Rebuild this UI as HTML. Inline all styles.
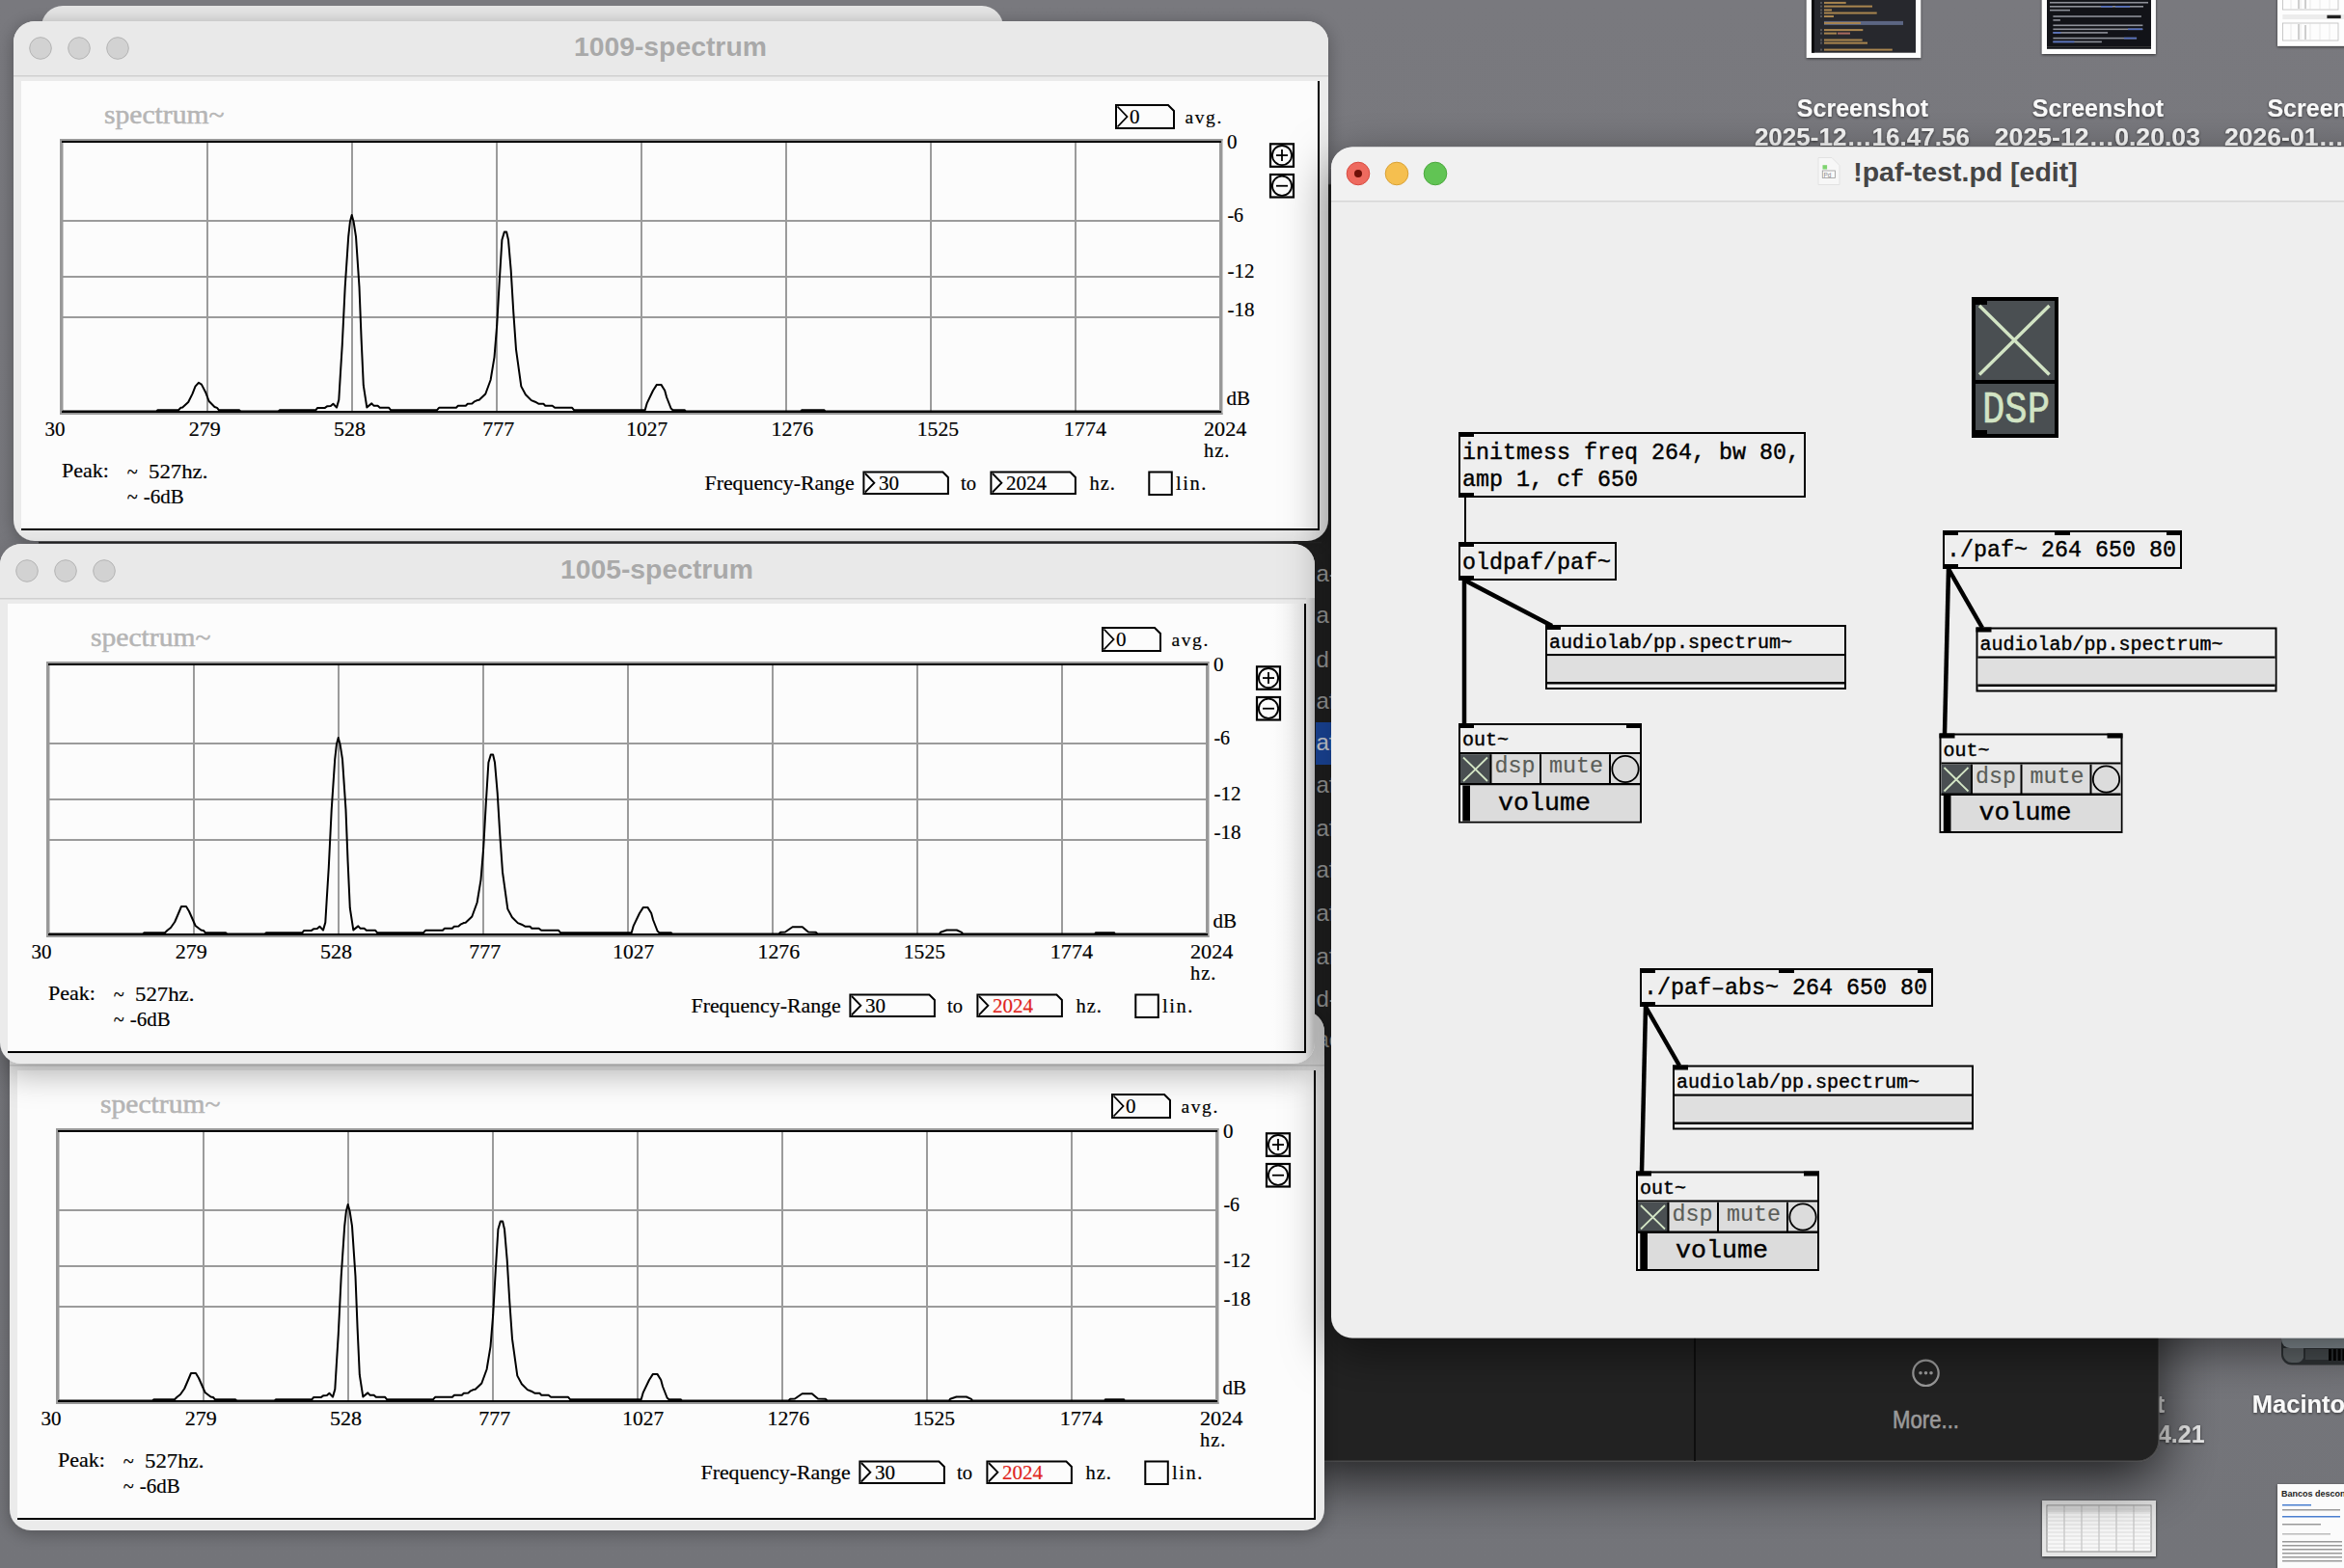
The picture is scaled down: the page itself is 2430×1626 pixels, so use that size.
<!DOCTYPE html><html><head><meta charset="utf-8"><style>html,body{margin:0;padding:0;background:#6e6f74;overflow:hidden}svg{display:block}</style></head><body>
<svg width="2430" height="1626" viewBox="0 0 2430 1626">
<defs>
<filter id="winshadow" x="-10%" y="-10%" width="120%" height="130%"><feDropShadow dx="0" dy="3" stdDeviation="9" flood-color="#000" flood-opacity="0.3"/></filter>
<filter id="winshadow2" x="-10%" y="-10%" width="120%" height="140%"><feDropShadow dx="0" dy="12" stdDeviation="16" flood-color="#000" flood-opacity="0.28"/></filter>
<filter id="pdshadow" x="-10%" y="-10%" width="120%" height="130%"><feDropShadow dx="0" dy="14" stdDeviation="24" flood-color="#000" flood-opacity="0.5"/></filter>
<filter id="bigshadow" x="-10%" y="-10%" width="120%" height="130%"><feDropShadow dx="0" dy="18" stdDeviation="30" flood-color="#000" flood-opacity="0.75"/></filter>
<filter id="txtshadow" x="-10%" y="-30%" width="120%" height="160%"><feDropShadow dx="0" dy="1" stdDeviation="1.5" flood-color="#000" flood-opacity="0.6"/></filter>
<linearGradient id="desk" x1="0" y1="0" x2="0" y2="1"><stop offset="0" stop-color="#79797e"/><stop offset="1" stop-color="#737479"/></linearGradient>
<linearGradient id="vg" x1="0" y1="0" x2="0" y2="1"><stop offset="0" stop-color="#fff" stop-opacity="0.1"/><stop offset="0.5" stop-color="#fff" stop-opacity="0.6"/><stop offset="1" stop-color="#fff"/></linearGradient>
<mask id="vmask" maskContentUnits="objectBoundingBox"><rect width="1" height="1" fill="url(#vg)"/></mask>
<linearGradient id="rshade" x1="0" y1="0" x2="1" y2="0"><stop offset="0" stop-color="#fcfcfc" stop-opacity="0"/><stop offset="1" stop-color="#d9d9d9"/></linearGradient>
<linearGradient id="bshade" x1="0" y1="0" x2="0" y2="1"><stop offset="0" stop-color="#fcfcfc" stop-opacity="0"/><stop offset="1" stop-color="#ececec"/></linearGradient>
<linearGradient id="frshade" x1="0" y1="0" x2="1" y2="0"><stop offset="0" stop-color="#e6e6e6"/><stop offset="1" stop-color="#c4c4c4"/></linearGradient>
<clipPath id="winclip"><rect x="14" y="22" width="1363" height="539" rx="22"/></clipPath>
<linearGradient id="bfshade" x1="0" y1="0" x2="1" y2="0"><stop offset="0" stop-color="#ebebeb" stop-opacity="0"/><stop offset="1" stop-color="#c6c6c6"/></linearGradient>
<linearGradient id="tb" x1="0" y1="0" x2="0" y2="1"><stop offset="0" stop-color="#f3f3f3"/><stop offset="1" stop-color="#eeeeee"/></linearGradient>
</defs>
<rect x="0" y="0" width="2430" height="1626" fill="url(#desk)"/>
<rect x="1872.8" y="-10" width="118.4" height="70" fill="#fdfdfd" filter="url(#txtshadow)"/>
<rect x="1878" y="-10" width="108" height="64.7" fill="#27282d"/>
<rect x="1878" y="-10" width="3" height="64.7" fill="#0c0c0e"/>
<rect x="1891" y="1.9" width="22.7" height="2" fill="#a9854f"/>
<rect x="1887" y="1.9" width="2" height="2" fill="#55565a"/>
<rect x="1891" y="5.6" width="50" height="2" fill="#a9854f"/>
<rect x="1887" y="5.6" width="2" height="2" fill="#55565a"/>
<rect x="1891" y="9.4" width="8" height="2" fill="#a9854f"/>
<rect x="1887" y="9.4" width="2" height="2" fill="#55565a"/>
<rect x="1891" y="12.5" width="54.7" height="2" fill="#a9854f"/>
<rect x="1887" y="12.5" width="2" height="2" fill="#55565a"/>
<rect x="1891" y="16" width="10" height="2" fill="#a9854f"/>
<rect x="1887" y="16" width="2" height="2" fill="#55565a"/>
<rect x="1891" y="30.1" width="40.3" height="2" fill="#a9854f"/>
<rect x="1887" y="30.1" width="2" height="2" fill="#55565a"/>
<rect x="1891" y="33.6" width="13" height="2" fill="#a9854f"/>
<rect x="1887" y="33.6" width="2" height="2" fill="#55565a"/>
<rect x="1891" y="40.5" width="39.7" height="2" fill="#a9854f"/>
<rect x="1887" y="40.5" width="2" height="2" fill="#55565a"/>
<rect x="1891" y="43.6" width="45" height="2" fill="#a9854f"/>
<rect x="1887" y="43.6" width="2" height="2" fill="#55565a"/>
<rect x="1891" y="50.6" width="70.8" height="2" fill="#a9854f"/>
<rect x="1887" y="50.6" width="2" height="2" fill="#55565a"/>
<rect x="1891" y="21.9" width="82" height="4" fill="#5c6683"/>
<rect x="1891" y="22.9" width="38" height="2" fill="#a9854f"/>
<rect x="1905" y="33.6" width="13" height="2" fill="#a86a60"/>
<rect x="2116.8" y="-10" width="118.1" height="66" fill="#fdfdfd" filter="url(#txtshadow)"/>
<rect x="2122" y="-10" width="108" height="60.8" fill="#121318"/>
<rect x="2125" y="1.9000000000000001" width="102" height="1.6" fill="#8d9098"/>
<rect x="2125" y="6.0" width="97" height="1.6" fill="#8d9098"/>
<rect x="2125" y="9.799999999999999" width="21" height="1.6" fill="#8d9098"/>
<rect x="2128.4" y="16.2" width="91.5" height="1.6" fill="#8d9098"/>
<rect x="2128.4" y="20.099999999999998" width="7.5" height="1.6" fill="#8d9098"/>
<rect x="2128.4" y="25.5" width="93" height="1.6" fill="#8d9098"/>
<rect x="2128.4" y="29.5" width="93" height="1.6" fill="#8d9098"/>
<rect x="2128.4" y="33.1" width="56.7" height="1.6" fill="#8d9098"/>
<rect x="2128.4" y="38.800000000000004" width="86.7" height="1.6" fill="#8d9098"/>
<rect x="2128.4" y="42.6" width="50.5" height="1.6" fill="#8d9098"/>
<rect x="2178" y="6.0" width="12" height="1.6" fill="#5570c0"/>
<rect x="2193" y="6.0" width="15" height="1.6" fill="#5570c0"/>
<rect x="2206" y="29.5" width="15" height="1.6" fill="#5570c0"/>
<rect x="2128.4" y="33.1" width="8" height="1.6" fill="#5570c0"/>
<rect x="2202" y="38.800000000000004" width="13" height="1.6" fill="#5570c0"/>
<rect x="2128.4" y="42.6" width="22" height="1.6" fill="#5570c0"/>
<rect x="2122" y="48" width="108" height="1" fill="#333"/>
<rect x="2361" y="-10" width="80" height="57.8" fill="#fdfdfd" filter="url(#txtshadow)"/>
<rect x="2366.4" y="-10" width="57.6" height="20" fill="none" stroke="#bbb" stroke-width="0.8"/>
<rect x="2366.4" y="24" width="57.6" height="18" fill="none" stroke="#bbb" stroke-width="0.8"/>
<line x1="2375" y1="-10" x2="2375" y2="10" stroke="#ddd" stroke-width="0.6"/>
<line x1="2375" y1="24" x2="2375" y2="42" stroke="#ddd" stroke-width="0.6"/>
<line x1="2385" y1="-10" x2="2385" y2="10" stroke="#ddd" stroke-width="0.6"/>
<line x1="2385" y1="24" x2="2385" y2="42" stroke="#ddd" stroke-width="0.6"/>
<line x1="2395" y1="-10" x2="2395" y2="10" stroke="#ddd" stroke-width="0.6"/>
<line x1="2395" y1="24" x2="2395" y2="42" stroke="#ddd" stroke-width="0.6"/>
<line x1="2405" y1="-10" x2="2405" y2="10" stroke="#ddd" stroke-width="0.6"/>
<line x1="2405" y1="24" x2="2405" y2="42" stroke="#ddd" stroke-width="0.6"/>
<line x1="2415" y1="-10" x2="2415" y2="10" stroke="#ddd" stroke-width="0.6"/>
<line x1="2415" y1="24" x2="2415" y2="42" stroke="#ddd" stroke-width="0.6"/>
<line x1="2383" y1="-10" x2="2383" y2="9" stroke="#888" stroke-width="0.8"/>
<line x1="2390" y1="0" x2="2390" y2="9" stroke="#888" stroke-width="0.8"/>
<line x1="2383" y1="25" x2="2383" y2="41" stroke="#888" stroke-width="0.8"/>
<line x1="2390" y1="26" x2="2390" y2="41" stroke="#888" stroke-width="0.8"/>
<rect x="2366.4" y="15" width="64" height="5" fill="#ececec"/>
<rect x="2412.4" y="15.7" width="14.3" height="3.4" fill="#222"/>
<g filter="url(#txtshadow)">
<text x="1931" y="120.5" font-family="Liberation Sans" font-size="25.5" fill="#fafafa" font-weight="bold" text-anchor="middle" textLength="136.3" lengthAdjust="spacingAndGlyphs">Screenshot</text>
<text x="1930.4" y="151" font-family="Liberation Sans" font-size="26" fill="#fafafa" font-weight="bold" text-anchor="middle" textLength="223" lengthAdjust="spacingAndGlyphs">2025-12…16.47.56</text>
<text x="2175" y="120.5" font-family="Liberation Sans" font-size="25.5" fill="#fafafa" font-weight="bold" text-anchor="middle" textLength="136.3" lengthAdjust="spacingAndGlyphs">Screenshot</text>
<text x="2174.4" y="151" font-family="Liberation Sans" font-size="26" fill="#fafafa" font-weight="bold" text-anchor="middle" textLength="213.2" lengthAdjust="spacingAndGlyphs">2025-12…0.20.03</text>
<text x="2350.4" y="120.5" font-family="Liberation Sans" font-size="25.5" fill="#fafafa" font-weight="bold" textLength="136.3" lengthAdjust="spacingAndGlyphs">Screenshot</text>
<text x="2306" y="151" font-family="Liberation Sans" font-size="26" fill="#fafafa" font-weight="bold" textLength="124" lengthAdjust="spacingAndGlyphs">2026-01…</text>
</g>
<g filter="url(#txtshadow)">
<text x="2334.8" y="1465" font-family="Liberation Sans" font-size="25.5" fill="#fafafa" font-weight="bold">Macintosh HD</text>
<text x="2237" y="1496" font-family="Liberation Sans" font-size="26" fill="#ececec" font-weight="bold" textLength="48.5" lengthAdjust="spacingAndGlyphs">4.21</text>
<text x="2235.5" y="1465" font-family="Liberation Sans" font-size="26" fill="#ececec" font-weight="bold">t</text>
</g>
<path d="M2365,1370 H2440 V1415.5 H2376 A11,11 0 0 1 2365,1404.5 Z" fill="#2e3235"/>
<path d="M2365,1370 H2440 V1398 H2374 A9,9 0 0 1 2365,1389 Z" fill="#8a949a"/>
<path d="M2367,1398 H2388 V1408 A8,8 0 0 1 2380,1413 H2376 A9,9 0 0 1 2367,1405 Z" fill="#5f6568"/>
<rect x="2390" y="1399" width="24" height="11" fill="#474c4f"/>
<rect x="2414.0" y="1399" width="3" height="12" fill="#050505"/>
<rect x="2418.8" y="1399" width="3" height="12" fill="#050505"/>
<rect x="2423.6" y="1399" width="3" height="12" fill="#050505"/>
<rect x="2428.4" y="1399" width="3" height="12" fill="#050505"/>
<rect x="2117" y="1556" width="118" height="58" fill="#e6e6e6" filter="url(#txtshadow)"/>
<rect x="2122" y="1561" width="108" height="48" fill="#f8f8f8" stroke="#888" stroke-width="1"/>
<rect x="2123" y="1562" width="106" height="6" fill="#ddd"/>
<line x1="2140" y1="1561" x2="2140" y2="1609" stroke="#aaa" stroke-width="0.8"/>
<line x1="2158" y1="1561" x2="2158" y2="1609" stroke="#aaa" stroke-width="0.8"/>
<line x1="2176" y1="1561" x2="2176" y2="1609" stroke="#aaa" stroke-width="0.8"/>
<line x1="2194" y1="1561" x2="2194" y2="1609" stroke="#aaa" stroke-width="0.8"/>
<line x1="2212" y1="1561" x2="2212" y2="1609" stroke="#aaa" stroke-width="0.8"/>
<line x1="2122" y1="1565" x2="2230" y2="1565" stroke="#ccc" stroke-width="0.6"/>
<line x1="2122" y1="1569" x2="2230" y2="1569" stroke="#ccc" stroke-width="0.6"/>
<line x1="2122" y1="1573" x2="2230" y2="1573" stroke="#ccc" stroke-width="0.6"/>
<line x1="2122" y1="1577" x2="2230" y2="1577" stroke="#ccc" stroke-width="0.6"/>
<line x1="2122" y1="1581" x2="2230" y2="1581" stroke="#ccc" stroke-width="0.6"/>
<line x1="2122" y1="1585" x2="2230" y2="1585" stroke="#ccc" stroke-width="0.6"/>
<line x1="2122" y1="1589" x2="2230" y2="1589" stroke="#ccc" stroke-width="0.6"/>
<line x1="2122" y1="1593" x2="2230" y2="1593" stroke="#ccc" stroke-width="0.6"/>
<line x1="2122" y1="1597" x2="2230" y2="1597" stroke="#ccc" stroke-width="0.6"/>
<line x1="2122" y1="1601" x2="2230" y2="1601" stroke="#ccc" stroke-width="0.6"/>
<line x1="2122" y1="1605" x2="2230" y2="1605" stroke="#ccc" stroke-width="0.6"/>
<rect x="2361" y="1539" width="80" height="100" fill="#fbfbfb" filter="url(#txtshadow)"/>
<text x="2365" y="1552" font-family="Liberation Sans" font-size="9" fill="#222" font-weight="bold">Bancos desconfortáv</text>
<rect x="2366" y="1560" width="30" height="1.5" fill="#4a7fd0"/>
<rect x="2366" y="1565" width="60" height="1.5" fill="#999"/>
<rect x="2366" y="1572" width="60" height="1.5" fill="#4a7fd0"/>
<rect x="2366" y="1580" width="40" height="1.5" fill="#999"/>
<rect x="2366" y="1590" width="50" height="1.5" fill="#bbb"/>
<rect x="2366" y="1598" width="62" height="1.5" fill="#999"/>
<rect x="2366" y="1602" width="62" height="1.5" fill="#999"/>
<rect x="2366" y="1606" width="62" height="1.5" fill="#999"/>
<rect x="2366" y="1610" width="62" height="1.5" fill="#999"/>
<rect x="2366" y="1614" width="62" height="1.5" fill="#999"/>
<rect x="2366" y="1618" width="62" height="1.5" fill="#999"/>
<path d="M1340,191 H2238 V1493 A22,22 0 0 1 2216,1515 H1340 Z" fill="#222222" stroke="#4a4a4a" stroke-width="1.2" filter="url(#bigshadow)"/>
<rect x="1756" y="1380" width="2" height="135" fill="#0e0e0e"/>
<circle cx="1996.5" cy="1423.8" r="13.2" fill="none" stroke="#9a9a9a" stroke-width="2.2"/>
<circle cx="1991.0" cy="1423.8" r="1.8" fill="#9a9a9a"/>
<circle cx="1996.5" cy="1423.8" r="1.8" fill="#9a9a9a"/>
<circle cx="2002.0" cy="1423.8" r="1.8" fill="#9a9a9a"/>
<text x="1996.5" y="1481" font-family="Liberation Sans" font-size="25" fill="#9a9a9a" text-anchor="middle" textLength="69" lengthAdjust="spacingAndGlyphs" stroke="#9a9a9a" stroke-width="0.6">More...</text>
<rect x="1364" y="749" width="16" height="44" fill="#1d4fb0"/>
<text x="1364.5" y="603" font-family="Liberation Sans" font-size="24" fill="#a9a9a9">a-</text>
<text x="1364.5" y="646" font-family="Liberation Sans" font-size="24" fill="#a9a9a9">a</text>
<text x="1364.5" y="692" font-family="Liberation Sans" font-size="24" fill="#a9a9a9">d</text>
<text x="1364.5" y="735" font-family="Liberation Sans" font-size="24" fill="#a9a9a9">af</text>
<text x="1364.5" y="778" font-family="Liberation Sans" font-size="24" fill="#e8ecf5">af</text>
<text x="1364.5" y="822" font-family="Liberation Sans" font-size="24" fill="#a9a9a9">af</text>
<text x="1364.5" y="867" font-family="Liberation Sans" font-size="24" fill="#a9a9a9">af</text>
<text x="1364.5" y="910" font-family="Liberation Sans" font-size="24" fill="#a9a9a9">af</text>
<text x="1364.5" y="955" font-family="Liberation Sans" font-size="24" fill="#a9a9a9">af</text>
<text x="1364.5" y="1000" font-family="Liberation Sans" font-size="24" fill="#a9a9a9">af</text>
<text x="1364.5" y="1044" font-family="Liberation Sans" font-size="24" fill="#a9a9a9">d-</text>
<text x="1364.5" y="1086" font-family="Liberation Sans" font-size="24" fill="#a9a9a9">ac</text>
<rect x="40" y="561.8" width="1330" height="1.6" fill="#2a2a2a"/>
<rect x="43" y="6" width="997" height="60" rx="22" fill="#e4e4e4"/>
<g transform="translate(-4,1026)">
<rect x="14" y="22" width="1363" height="539" rx="22" fill="#ebebeb" filter="url(#winshadow)"/>
<path d="M14,78.5 V44 A22,22 0 0 1 36,22 H1355 A22,22 0 0 1 1377,44 V78.5 Z" fill="#e9e9e9"/>
<line x1="14" y1="78.75" x2="1377" y2="78.75" stroke="#d0d0d0" stroke-width="1.5"/>
<circle cx="42" cy="50" r="11.3" fill="#d2d2d2" stroke="#b4b4b4" stroke-width="1"/>
<circle cx="82" cy="50" r="11.3" fill="#d2d2d2" stroke="#b4b4b4" stroke-width="1"/>
<circle cx="122" cy="50" r="11.3" fill="#d2d2d2" stroke="#b4b4b4" stroke-width="1"/>
<rect x="22" y="84" width="1345" height="465" fill="#fcfcfc"/>
<rect x="1366" y="84" width="2" height="466" fill="#000"/>
<rect x="22" y="548" width="1346" height="2" fill="#000"/>
<text x="108" y="128.4" font-family="Liberation Serif" font-size="27" fill="#b5b5b5" textLength="124.5" lengthAdjust="spacingAndGlyphs" stroke="#b5b5b5" stroke-width="0.5">spectrum~</text>
<path d="M1157,109 H1211 L1217,115 V133 H1157 Z" fill="none" stroke="#000" stroke-width="2"/>
<path d="M1158.5,110.5 L1168.5,121 L1158.5,131.5" fill="none" stroke="#000" stroke-width="1.8"/>
<text x="1171" y="127.6" font-family="Liberation Serif" font-size="21" fill="#000" textLength="10.5" lengthAdjust="spacingAndGlyphs" stroke="#000" stroke-width="0.2">0</text>
<text x="1228.5" y="127.6" font-family="Liberation Serif" font-size="19.5" fill="#000" stroke="#000" stroke-width="0.2" letter-spacing="1.6">avg.</text>
<rect x="62" y="144" width="1205.5" height="286" fill="#fcfcfc"/>
<rect x="214" y="148" width="2" height="278" fill="#9b9b9b"/>
<rect x="364" y="148" width="2" height="278" fill="#9b9b9b"/>
<rect x="514" y="148" width="2" height="278" fill="#9b9b9b"/>
<rect x="664" y="148" width="2" height="278" fill="#9b9b9b"/>
<rect x="814" y="148" width="2" height="278" fill="#9b9b9b"/>
<rect x="964" y="148" width="2" height="278" fill="#9b9b9b"/>
<rect x="1114" y="148" width="2" height="278" fill="#9b9b9b"/>
<rect x="65" y="228" width="1199" height="2" fill="#9b9b9b"/>
<rect x="65" y="286" width="1199" height="2" fill="#9b9b9b"/>
<rect x="65" y="328" width="1199" height="2" fill="#9b9b9b"/>
<rect x="62" y="144" width="3.5" height="286" fill="#999"/>
<rect x="1264" y="144" width="3.5" height="286" fill="#999"/>
<rect x="62" y="144" width="1205.5" height="2" fill="#999"/>
<rect x="62" y="428" width="1205.5" height="2" fill="#999"/>
<rect x="64" y="146" width="1202" height="2" fill="#000"/>
<rect x="64" y="426" width="1202" height="2" fill="#000"/>
<polyline points="65,426.5 162,426.5 163.5,425.2 185,425.2 187.5,422.7 191,420 195.2,414 199.5,404 202,398 207,398 210,403 213.1,410 216.6,418 222.5,422.5 225,423 226.8,425.2 248,425.2 249.5,426.5 288.5,426.5 290,425.2 327.5,425.2 329.2,422.9 336.9,422.9 339.4,421.2 342.8,421 345.4,418.8 349,422.6 351.3,414.6 352.7,391.2 354.8,357.3 357.7,297.8 361.2,245.4 362.9,230 364.7,223 366.6,230 369,245.4 372.5,297.8 374.6,351.6 376.8,399.7 380.3,422.4 385.3,418.4 387.4,420.7 391.6,420.7 393.8,422.7 403,422.7 405,425.2 453.1,425.2 455.1,422.8 472.9,422.8 474.9,420.7 482.8,420.7 484.8,418.8 489.4,418.4 491.4,416.7 494.7,415.1 496.7,414.8 503.3,408.5 508.6,394 512.5,370.3 515.2,337.2 517.8,291 520.4,248.8 522.8,240.6 525.1,240.6 527,248.8 529.7,280.5 532.3,324 535,362.3 540.3,400.6 544.9,409.2 550.8,415.1 554.8,416.7 558.7,418.8 563.4,418.8 565.3,420.7 572.6,420.7 575.2,422.8 593.1,422.8 595,425.2 666.8,425.2 668.7,425.2 670.6,418.4 677,405 680.9,398.9 685.4,398.9 689.2,405 691.1,412 695.6,423.5 697.5,425.2 709.7,425.2 711,426.5 821.5,426.5 823,424.8 828,424.5 835.6,419.2 845.8,419.2 852,424.5 860,424.8 861.5,426.5 987.9,426.5 989,424.8 995.5,422.5 1005.8,422.5 1011,424.8 1012.2,426.5 1149,426.5 1150,425.2 1169,425.2 1170,426.5 1264,426.5" fill="none" stroke="#000" stroke-width="2" stroke-linejoin="round"/>
<text x="1272" y="153.5" font-family="Liberation Serif" font-size="21.5" fill="#000" textLength="10.5" lengthAdjust="spacingAndGlyphs" stroke="#000" stroke-width="0.2">0</text>
<text x="1272.4" y="229.7" font-family="Liberation Serif" font-size="21.5" fill="#000" textLength="16.6" lengthAdjust="spacingAndGlyphs" stroke="#000" stroke-width="0.2">-6</text>
<text x="1272.4" y="287.9" font-family="Liberation Serif" font-size="21.5" fill="#000" textLength="28" lengthAdjust="spacingAndGlyphs" stroke="#000" stroke-width="0.2">-12</text>
<text x="1272.4" y="328.4" font-family="Liberation Serif" font-size="21.5" fill="#000" textLength="28" lengthAdjust="spacingAndGlyphs" stroke="#000" stroke-width="0.2">-18</text>
<text x="1271.5" y="419.7" font-family="Liberation Serif" font-size="21.5" fill="#000" textLength="24.5" lengthAdjust="spacingAndGlyphs" stroke="#000" stroke-width="0.2">dB</text>
<rect x="1317" y="149.3" width="24" height="23.5" fill="none" stroke="#000" stroke-width="2.2"/>
<circle cx="1329" cy="161.05" r="10.1" fill="none" stroke="#000" stroke-width="1.9"/>
<line x1="1323" y1="161.05" x2="1335" y2="161.05" stroke="#000" stroke-width="1.8"/>
<line x1="1329" y1="155.05" x2="1329" y2="167.05" stroke="#000" stroke-width="1.8"/>
<rect x="1317" y="181" width="24" height="23.5" fill="none" stroke="#000" stroke-width="2.2"/>
<circle cx="1329" cy="192.75" r="10.1" fill="none" stroke="#000" stroke-width="1.9"/>
<line x1="1323" y1="192.75" x2="1335" y2="192.75" stroke="#000" stroke-width="1.8"/>
<text x="46.5" y="452.2" font-family="Liberation Serif" font-size="21.7" fill="#000" textLength="21" lengthAdjust="spacingAndGlyphs" stroke="#000" stroke-width="0.2">30</text>
<text x="195.8" y="452.2" font-family="Liberation Serif" font-size="21.7" fill="#000" textLength="33" lengthAdjust="spacingAndGlyphs" stroke="#000" stroke-width="0.2">279</text>
<text x="346" y="452.2" font-family="Liberation Serif" font-size="21.7" fill="#000" textLength="33" lengthAdjust="spacingAndGlyphs" stroke="#000" stroke-width="0.2">528</text>
<text x="500.2" y="452.2" font-family="Liberation Serif" font-size="21.7" fill="#000" textLength="33" lengthAdjust="spacingAndGlyphs" stroke="#000" stroke-width="0.2">777</text>
<text x="649.3" y="452.2" font-family="Liberation Serif" font-size="21.7" fill="#000" textLength="42.8" lengthAdjust="spacingAndGlyphs" stroke="#000" stroke-width="0.2">1027</text>
<text x="799.5" y="452.2" font-family="Liberation Serif" font-size="21.7" fill="#000" textLength="43.7" lengthAdjust="spacingAndGlyphs" stroke="#000" stroke-width="0.2">1276</text>
<text x="950.8" y="452.2" font-family="Liberation Serif" font-size="21.7" fill="#000" textLength="43.2" lengthAdjust="spacingAndGlyphs" stroke="#000" stroke-width="0.2">1525</text>
<text x="1102.8" y="452.2" font-family="Liberation Serif" font-size="21.7" fill="#000" textLength="44.3" lengthAdjust="spacingAndGlyphs" stroke="#000" stroke-width="0.2">1774</text>
<text x="1248" y="452.2" font-family="Liberation Serif" font-size="21.7" fill="#000" textLength="44.4" lengthAdjust="spacingAndGlyphs" stroke="#000" stroke-width="0.2">2024</text>
<text x="1248" y="474" font-family="Liberation Serif" font-size="20.5" fill="#000" stroke="#000" stroke-width="0.2" letter-spacing="1">hz.</text>
<text x="64" y="494.5" font-family="Liberation Serif" font-size="22" fill="#000" textLength="49" lengthAdjust="spacingAndGlyphs" stroke="#000" stroke-width="0.2">Peak:</text>
<text x="131.8" y="496" font-family="Liberation Serif" font-size="22" fill="#000" textLength="11" lengthAdjust="spacingAndGlyphs" stroke="#000" stroke-width="0.2">~</text>
<text x="154" y="496" font-family="Liberation Serif" font-size="22" fill="#000" textLength="61.4" lengthAdjust="spacingAndGlyphs" stroke="#000" stroke-width="0.2">527hz.</text>
<text x="131.8" y="522" font-family="Liberation Serif" font-size="22" fill="#000" textLength="11" lengthAdjust="spacingAndGlyphs" stroke="#000" stroke-width="0.2">~</text>
<text x="148.8" y="522" font-family="Liberation Serif" font-size="22" fill="#000" textLength="41.8" lengthAdjust="spacingAndGlyphs" stroke="#000" stroke-width="0.2">-6dB</text>
<text x="730.5" y="508.2" font-family="Liberation Serif" font-size="21.7" fill="#000" textLength="155.2" lengthAdjust="spacingAndGlyphs" stroke="#000" stroke-width="0.2">Frequency-Range</text>
<path d="M895.4,489.5 H977.4 L982.9,495 V512 H895.4 Z" fill="none" stroke="#000" stroke-width="2"/>
<path d="M896.9,491 L906.4,500.75 L896.9,510.5" fill="none" stroke="#000" stroke-width="1.8"/>
<text x="910.9" y="507.6" font-family="Liberation Serif" font-size="21" fill="#000" textLength="21.0" lengthAdjust="spacingAndGlyphs" stroke="#000" stroke-width="0.2">30</text>
<path d="M1027.4,489.5 H1109.4 L1114.9,495 V512 H1027.4 Z" fill="none" stroke="#000" stroke-width="2"/>
<path d="M1028.9,491 L1038.4,500.75 L1028.9,510.5" fill="none" stroke="#000" stroke-width="1.8"/>
<text x="1042.9" y="507.6" font-family="Liberation Serif" font-size="21" fill="#e0241c" textLength="42.0" lengthAdjust="spacingAndGlyphs" stroke="#e0241c" stroke-width="0.2">2024</text>
<text x="996" y="508.2" font-family="Liberation Serif" font-size="21.7" fill="#000" textLength="16" lengthAdjust="spacingAndGlyphs" stroke="#000" stroke-width="0.2">to</text>
<text x="1129.4" y="508.2" font-family="Liberation Serif" font-size="20.5" fill="#000" stroke="#000" stroke-width="0.2" letter-spacing="1">hz.</text>
<rect x="1191.3" y="489.5" width="23.5" height="23.5" fill="none" stroke="#000" stroke-width="2"/>
<text x="1219" y="508.2" font-family="Liberation Serif" font-size="20.5" fill="#000" stroke="#000" stroke-width="0.2" letter-spacing="1.5">lin.</text>
</g>
<g transform="translate(0,0)">
<rect x="14" y="22" width="1363" height="539" rx="22" fill="#ebebeb" filter="url(#winshadow)"/>
<path d="M14,78.5 V44 A22,22 0 0 1 36,22 H1355 A22,22 0 0 1 1377,44 V78.5 Z" fill="#e9e9e9"/>
<line x1="14" y1="78.75" x2="1377" y2="78.75" stroke="#d0d0d0" stroke-width="1.5"/>
<circle cx="42" cy="50" r="11.3" fill="#d2d2d2" stroke="#b4b4b4" stroke-width="1"/>
<circle cx="82" cy="50" r="11.3" fill="#d2d2d2" stroke="#b4b4b4" stroke-width="1"/>
<circle cx="122" cy="50" r="11.3" fill="#d2d2d2" stroke="#b4b4b4" stroke-width="1"/>
<text x="694.9" y="58" font-family="Liberation Sans" font-size="27.9" fill="#a9a9a9" font-weight="bold" text-anchor="middle" textLength="200" lengthAdjust="spacingAndGlyphs">1009-spectrum</text>
<rect x="22" y="84" width="1345" height="465" fill="#fcfcfc"/>
<rect x="1366" y="84" width="2" height="466" fill="#000"/>
<rect x="22" y="548" width="1346" height="2" fill="#000"/>
<text x="108" y="128.4" font-family="Liberation Serif" font-size="27" fill="#b5b5b5" textLength="124.5" lengthAdjust="spacingAndGlyphs" stroke="#b5b5b5" stroke-width="0.5">spectrum~</text>
<path d="M1157,109 H1211 L1217,115 V133 H1157 Z" fill="none" stroke="#000" stroke-width="2"/>
<path d="M1158.5,110.5 L1168.5,121 L1158.5,131.5" fill="none" stroke="#000" stroke-width="1.8"/>
<text x="1171" y="127.6" font-family="Liberation Serif" font-size="21" fill="#000" textLength="10.5" lengthAdjust="spacingAndGlyphs" stroke="#000" stroke-width="0.2">0</text>
<text x="1228.5" y="127.6" font-family="Liberation Serif" font-size="19.5" fill="#000" stroke="#000" stroke-width="0.2" letter-spacing="1.6">avg.</text>
<rect x="62" y="144" width="1205.5" height="286" fill="#fcfcfc"/>
<rect x="214" y="148" width="2" height="278" fill="#9b9b9b"/>
<rect x="364" y="148" width="2" height="278" fill="#9b9b9b"/>
<rect x="514" y="148" width="2" height="278" fill="#9b9b9b"/>
<rect x="664" y="148" width="2" height="278" fill="#9b9b9b"/>
<rect x="814" y="148" width="2" height="278" fill="#9b9b9b"/>
<rect x="964" y="148" width="2" height="278" fill="#9b9b9b"/>
<rect x="1114" y="148" width="2" height="278" fill="#9b9b9b"/>
<rect x="65" y="228" width="1199" height="2" fill="#9b9b9b"/>
<rect x="65" y="286" width="1199" height="2" fill="#9b9b9b"/>
<rect x="65" y="328" width="1199" height="2" fill="#9b9b9b"/>
<rect x="62" y="144" width="3.5" height="286" fill="#999"/>
<rect x="1264" y="144" width="3.5" height="286" fill="#999"/>
<rect x="62" y="144" width="1205.5" height="2" fill="#999"/>
<rect x="62" y="428" width="1205.5" height="2" fill="#999"/>
<rect x="64" y="146" width="1202" height="2" fill="#000"/>
<rect x="64" y="426" width="1202" height="2" fill="#000"/>
<polyline points="65,426.5 162,426.5 163.5,425.2 185,425.2 187.5,422.7 189.2,422.5 195.2,417 199.5,408.4 202.5,400.7 205.9,396.9 208.9,398.6 213.1,406.7 216.6,416 222.5,422 225,422.9 226.8,425.2 248,425.2 249.5,426.5 288.5,426.5 290,425.2 327.5,425.2 329.2,422.9 336.9,422.9 339.4,421.2 342.8,421 345.4,418.8 349,422.6 351.3,414.6 352.7,391.2 354.8,357.3 357.7,297.8 361.2,245.4 362.9,230 364.7,223 366.6,230 369,245.4 372.5,297.8 374.6,351.6 376.8,399.7 380.3,422.4 385.3,418.4 387.4,420.7 391.6,420.7 393.8,422.7 403,422.7 405,425.2 453.1,425.2 455.1,422.8 472.9,422.8 474.9,420.7 482.8,420.7 484.8,418.8 489.4,418.4 491.4,416.7 494.7,415.1 496.7,414.8 503.3,408.5 508.6,394 512.5,370.3 515.2,337.2 517.8,291 520.4,248.8 522.8,240.6 525.1,240.6 527,248.8 529.7,280.5 532.3,324 535,362.3 540.3,400.6 544.9,409.2 550.8,415.1 554.8,416.7 558.7,418.8 563.4,418.8 565.3,420.7 572.6,420.7 575.2,422.8 593.1,422.8 595,425.2 666.8,425.2 668.7,425.2 670.6,418.4 677,405 680.9,398.9 685.4,398.9 689.2,405 691.1,412 695.6,423.5 697.5,425.2 709.7,425.2 711,426.5 830,426.5 831.3,425.2 854.3,425.2 855.5,426.5 1264,426.5" fill="none" stroke="#000" stroke-width="2" stroke-linejoin="round"/>
<text x="1272" y="153.5" font-family="Liberation Serif" font-size="21.5" fill="#000" textLength="10.5" lengthAdjust="spacingAndGlyphs" stroke="#000" stroke-width="0.2">0</text>
<text x="1272.4" y="229.7" font-family="Liberation Serif" font-size="21.5" fill="#000" textLength="16.6" lengthAdjust="spacingAndGlyphs" stroke="#000" stroke-width="0.2">-6</text>
<text x="1272.4" y="287.9" font-family="Liberation Serif" font-size="21.5" fill="#000" textLength="28" lengthAdjust="spacingAndGlyphs" stroke="#000" stroke-width="0.2">-12</text>
<text x="1272.4" y="328.4" font-family="Liberation Serif" font-size="21.5" fill="#000" textLength="28" lengthAdjust="spacingAndGlyphs" stroke="#000" stroke-width="0.2">-18</text>
<text x="1271.5" y="419.7" font-family="Liberation Serif" font-size="21.5" fill="#000" textLength="24.5" lengthAdjust="spacingAndGlyphs" stroke="#000" stroke-width="0.2">dB</text>
<rect x="1317" y="149.3" width="24" height="23.5" fill="none" stroke="#000" stroke-width="2.2"/>
<circle cx="1329" cy="161.05" r="10.1" fill="none" stroke="#000" stroke-width="1.9"/>
<line x1="1323" y1="161.05" x2="1335" y2="161.05" stroke="#000" stroke-width="1.8"/>
<line x1="1329" y1="155.05" x2="1329" y2="167.05" stroke="#000" stroke-width="1.8"/>
<rect x="1317" y="181" width="24" height="23.5" fill="none" stroke="#000" stroke-width="2.2"/>
<circle cx="1329" cy="192.75" r="10.1" fill="none" stroke="#000" stroke-width="1.9"/>
<line x1="1323" y1="192.75" x2="1335" y2="192.75" stroke="#000" stroke-width="1.8"/>
<text x="46.5" y="452.2" font-family="Liberation Serif" font-size="21.7" fill="#000" textLength="21" lengthAdjust="spacingAndGlyphs" stroke="#000" stroke-width="0.2">30</text>
<text x="195.8" y="452.2" font-family="Liberation Serif" font-size="21.7" fill="#000" textLength="33" lengthAdjust="spacingAndGlyphs" stroke="#000" stroke-width="0.2">279</text>
<text x="346" y="452.2" font-family="Liberation Serif" font-size="21.7" fill="#000" textLength="33" lengthAdjust="spacingAndGlyphs" stroke="#000" stroke-width="0.2">528</text>
<text x="500.2" y="452.2" font-family="Liberation Serif" font-size="21.7" fill="#000" textLength="33" lengthAdjust="spacingAndGlyphs" stroke="#000" stroke-width="0.2">777</text>
<text x="649.3" y="452.2" font-family="Liberation Serif" font-size="21.7" fill="#000" textLength="42.8" lengthAdjust="spacingAndGlyphs" stroke="#000" stroke-width="0.2">1027</text>
<text x="799.5" y="452.2" font-family="Liberation Serif" font-size="21.7" fill="#000" textLength="43.7" lengthAdjust="spacingAndGlyphs" stroke="#000" stroke-width="0.2">1276</text>
<text x="950.8" y="452.2" font-family="Liberation Serif" font-size="21.7" fill="#000" textLength="43.2" lengthAdjust="spacingAndGlyphs" stroke="#000" stroke-width="0.2">1525</text>
<text x="1102.8" y="452.2" font-family="Liberation Serif" font-size="21.7" fill="#000" textLength="44.3" lengthAdjust="spacingAndGlyphs" stroke="#000" stroke-width="0.2">1774</text>
<text x="1248" y="452.2" font-family="Liberation Serif" font-size="21.7" fill="#000" textLength="44.4" lengthAdjust="spacingAndGlyphs" stroke="#000" stroke-width="0.2">2024</text>
<text x="1248" y="474" font-family="Liberation Serif" font-size="20.5" fill="#000" stroke="#000" stroke-width="0.2" letter-spacing="1">hz.</text>
<text x="64" y="494.5" font-family="Liberation Serif" font-size="22" fill="#000" textLength="49" lengthAdjust="spacingAndGlyphs" stroke="#000" stroke-width="0.2">Peak:</text>
<text x="131.8" y="496" font-family="Liberation Serif" font-size="22" fill="#000" textLength="11" lengthAdjust="spacingAndGlyphs" stroke="#000" stroke-width="0.2">~</text>
<text x="154" y="496" font-family="Liberation Serif" font-size="22" fill="#000" textLength="61.4" lengthAdjust="spacingAndGlyphs" stroke="#000" stroke-width="0.2">527hz.</text>
<text x="131.8" y="522" font-family="Liberation Serif" font-size="22" fill="#000" textLength="11" lengthAdjust="spacingAndGlyphs" stroke="#000" stroke-width="0.2">~</text>
<text x="148.8" y="522" font-family="Liberation Serif" font-size="22" fill="#000" textLength="41.8" lengthAdjust="spacingAndGlyphs" stroke="#000" stroke-width="0.2">-6dB</text>
<text x="730.5" y="508.2" font-family="Liberation Serif" font-size="21.7" fill="#000" textLength="155.2" lengthAdjust="spacingAndGlyphs" stroke="#000" stroke-width="0.2">Frequency-Range</text>
<path d="M895.4,489.5 H977.4 L982.9,495 V512 H895.4 Z" fill="none" stroke="#000" stroke-width="2"/>
<path d="M896.9,491 L906.4,500.75 L896.9,510.5" fill="none" stroke="#000" stroke-width="1.8"/>
<text x="910.9" y="507.6" font-family="Liberation Serif" font-size="21" fill="#000" textLength="21.0" lengthAdjust="spacingAndGlyphs" stroke="#000" stroke-width="0.2">30</text>
<path d="M1027.4,489.5 H1109.4 L1114.9,495 V512 H1027.4 Z" fill="none" stroke="#000" stroke-width="2"/>
<path d="M1028.9,491 L1038.4,500.75 L1028.9,510.5" fill="none" stroke="#000" stroke-width="1.8"/>
<text x="1042.9" y="507.6" font-family="Liberation Serif" font-size="21" fill="#000" textLength="42.0" lengthAdjust="spacingAndGlyphs" stroke="#000" stroke-width="0.2">2024</text>
<text x="996" y="508.2" font-family="Liberation Serif" font-size="21.7" fill="#000" textLength="16" lengthAdjust="spacingAndGlyphs" stroke="#000" stroke-width="0.2">to</text>
<text x="1129.4" y="508.2" font-family="Liberation Serif" font-size="20.5" fill="#000" stroke="#000" stroke-width="0.2" letter-spacing="1">hz.</text>
<rect x="1191.3" y="489.5" width="23.5" height="23.5" fill="none" stroke="#000" stroke-width="2"/>
<text x="1219" y="508.2" font-family="Liberation Serif" font-size="20.5" fill="#000" stroke="#000" stroke-width="0.2" letter-spacing="1.5">lin.</text>
</g>
<g transform="translate(-14,542)">
<rect x="14" y="22" width="1363" height="539" rx="22" fill="#ebebeb" filter="url(#winshadow2)"/>
<path d="M14,78.5 V44 A22,22 0 0 1 36,22 H1355 A22,22 0 0 1 1377,44 V78.5 Z" fill="#e9e9e9"/>
<line x1="14" y1="78.75" x2="1377" y2="78.75" stroke="#d0d0d0" stroke-width="1.5"/>
<circle cx="42" cy="50" r="11.3" fill="#d2d2d2" stroke="#b4b4b4" stroke-width="1"/>
<circle cx="82" cy="50" r="11.3" fill="#d2d2d2" stroke="#b4b4b4" stroke-width="1"/>
<circle cx="122" cy="50" r="11.3" fill="#d2d2d2" stroke="#b4b4b4" stroke-width="1"/>
<text x="694.9" y="58" font-family="Liberation Sans" font-size="27.9" fill="#a9a9a9" font-weight="bold" text-anchor="middle" textLength="200" lengthAdjust="spacingAndGlyphs">1005-spectrum</text>
<rect x="22" y="84" width="1345" height="465" fill="#fcfcfc"/>
<rect x="1330" y="84" width="37" height="465" fill="url(#rshade)" opacity="0.7"/>
<g clip-path="url(#winclip)">
<rect x="1368" y="78" width="10" height="483" fill="url(#frshade)"/>
</g>
<rect x="1366" y="84" width="2" height="466" fill="#000"/>
<rect x="22" y="548" width="1346" height="2" fill="#000"/>
<text x="108" y="128.4" font-family="Liberation Serif" font-size="27" fill="#b5b5b5" textLength="124.5" lengthAdjust="spacingAndGlyphs" stroke="#b5b5b5" stroke-width="0.5">spectrum~</text>
<path d="M1157,109 H1211 L1217,115 V133 H1157 Z" fill="none" stroke="#000" stroke-width="2"/>
<path d="M1158.5,110.5 L1168.5,121 L1158.5,131.5" fill="none" stroke="#000" stroke-width="1.8"/>
<text x="1171" y="127.6" font-family="Liberation Serif" font-size="21" fill="#000" textLength="10.5" lengthAdjust="spacingAndGlyphs" stroke="#000" stroke-width="0.2">0</text>
<text x="1228.5" y="127.6" font-family="Liberation Serif" font-size="19.5" fill="#000" stroke="#000" stroke-width="0.2" letter-spacing="1.6">avg.</text>
<rect x="62" y="144" width="1205.5" height="286" fill="#fcfcfc"/>
<rect x="214" y="148" width="2" height="278" fill="#9b9b9b"/>
<rect x="364" y="148" width="2" height="278" fill="#9b9b9b"/>
<rect x="514" y="148" width="2" height="278" fill="#9b9b9b"/>
<rect x="664" y="148" width="2" height="278" fill="#9b9b9b"/>
<rect x="814" y="148" width="2" height="278" fill="#9b9b9b"/>
<rect x="964" y="148" width="2" height="278" fill="#9b9b9b"/>
<rect x="1114" y="148" width="2" height="278" fill="#9b9b9b"/>
<rect x="65" y="228" width="1199" height="2" fill="#9b9b9b"/>
<rect x="65" y="286" width="1199" height="2" fill="#9b9b9b"/>
<rect x="65" y="328" width="1199" height="2" fill="#9b9b9b"/>
<rect x="62" y="144" width="3.5" height="286" fill="#999"/>
<rect x="1264" y="144" width="3.5" height="286" fill="#999"/>
<rect x="62" y="144" width="1205.5" height="2" fill="#999"/>
<rect x="62" y="428" width="1205.5" height="2" fill="#999"/>
<rect x="64" y="146" width="1202" height="2" fill="#000"/>
<rect x="64" y="426" width="1202" height="2" fill="#000"/>
<polyline points="65,426.5 162,426.5 163.5,425.2 185,425.2 187.5,422.7 191,420 195.2,414 199.5,404 202,398 207,398 210,403 213.1,410 216.6,418 222.5,422.5 225,423 226.8,425.2 248,425.2 249.5,426.5 288.5,426.5 290,425.2 327.5,425.2 329.2,422.9 336.9,422.9 339.4,421.2 342.8,421 345.4,418.8 349,422.6 351.3,414.6 352.7,391.2 354.8,357.3 357.7,297.8 361.2,245.4 362.9,230 364.7,223 366.6,230 369,245.4 372.5,297.8 374.6,351.6 376.8,399.7 380.3,422.4 385.3,418.4 387.4,420.7 391.6,420.7 393.8,422.7 403,422.7 405,425.2 453.1,425.2 455.1,422.8 472.9,422.8 474.9,420.7 482.8,420.7 484.8,418.8 489.4,418.4 491.4,416.7 494.7,415.1 496.7,414.8 503.3,408.5 508.6,394 512.5,370.3 515.2,337.2 517.8,291 520.4,248.8 522.8,240.6 525.1,240.6 527,248.8 529.7,280.5 532.3,324 535,362.3 540.3,400.6 544.9,409.2 550.8,415.1 554.8,416.7 558.7,418.8 563.4,418.8 565.3,420.7 572.6,420.7 575.2,422.8 593.1,422.8 595,425.2 666.8,425.2 668.7,425.2 670.6,418.4 677,405 680.9,398.9 685.4,398.9 689.2,405 691.1,412 695.6,423.5 697.5,425.2 709.7,425.2 711,426.5 821.5,426.5 823,424.8 828,424.5 835.6,419.2 845.8,419.2 852,424.5 860,424.8 861.5,426.5 987.9,426.5 989,424.8 995.5,422.5 1005.8,422.5 1011,424.8 1012.2,426.5 1149,426.5 1150,425.2 1169,425.2 1170,426.5 1264,426.5" fill="none" stroke="#000" stroke-width="2" stroke-linejoin="round"/>
<text x="1272" y="153.5" font-family="Liberation Serif" font-size="21.5" fill="#000" textLength="10.5" lengthAdjust="spacingAndGlyphs" stroke="#000" stroke-width="0.2">0</text>
<text x="1272.4" y="229.7" font-family="Liberation Serif" font-size="21.5" fill="#000" textLength="16.6" lengthAdjust="spacingAndGlyphs" stroke="#000" stroke-width="0.2">-6</text>
<text x="1272.4" y="287.9" font-family="Liberation Serif" font-size="21.5" fill="#000" textLength="28" lengthAdjust="spacingAndGlyphs" stroke="#000" stroke-width="0.2">-12</text>
<text x="1272.4" y="328.4" font-family="Liberation Serif" font-size="21.5" fill="#000" textLength="28" lengthAdjust="spacingAndGlyphs" stroke="#000" stroke-width="0.2">-18</text>
<text x="1271.5" y="419.7" font-family="Liberation Serif" font-size="21.5" fill="#000" textLength="24.5" lengthAdjust="spacingAndGlyphs" stroke="#000" stroke-width="0.2">dB</text>
<rect x="1317" y="149.3" width="24" height="23.5" fill="none" stroke="#000" stroke-width="2.2"/>
<circle cx="1329" cy="161.05" r="10.1" fill="none" stroke="#000" stroke-width="1.9"/>
<line x1="1323" y1="161.05" x2="1335" y2="161.05" stroke="#000" stroke-width="1.8"/>
<line x1="1329" y1="155.05" x2="1329" y2="167.05" stroke="#000" stroke-width="1.8"/>
<rect x="1317" y="181" width="24" height="23.5" fill="none" stroke="#000" stroke-width="2.2"/>
<circle cx="1329" cy="192.75" r="10.1" fill="none" stroke="#000" stroke-width="1.9"/>
<line x1="1323" y1="192.75" x2="1335" y2="192.75" stroke="#000" stroke-width="1.8"/>
<text x="46.5" y="452.2" font-family="Liberation Serif" font-size="21.7" fill="#000" textLength="21" lengthAdjust="spacingAndGlyphs" stroke="#000" stroke-width="0.2">30</text>
<text x="195.8" y="452.2" font-family="Liberation Serif" font-size="21.7" fill="#000" textLength="33" lengthAdjust="spacingAndGlyphs" stroke="#000" stroke-width="0.2">279</text>
<text x="346" y="452.2" font-family="Liberation Serif" font-size="21.7" fill="#000" textLength="33" lengthAdjust="spacingAndGlyphs" stroke="#000" stroke-width="0.2">528</text>
<text x="500.2" y="452.2" font-family="Liberation Serif" font-size="21.7" fill="#000" textLength="33" lengthAdjust="spacingAndGlyphs" stroke="#000" stroke-width="0.2">777</text>
<text x="649.3" y="452.2" font-family="Liberation Serif" font-size="21.7" fill="#000" textLength="42.8" lengthAdjust="spacingAndGlyphs" stroke="#000" stroke-width="0.2">1027</text>
<text x="799.5" y="452.2" font-family="Liberation Serif" font-size="21.7" fill="#000" textLength="43.7" lengthAdjust="spacingAndGlyphs" stroke="#000" stroke-width="0.2">1276</text>
<text x="950.8" y="452.2" font-family="Liberation Serif" font-size="21.7" fill="#000" textLength="43.2" lengthAdjust="spacingAndGlyphs" stroke="#000" stroke-width="0.2">1525</text>
<text x="1102.8" y="452.2" font-family="Liberation Serif" font-size="21.7" fill="#000" textLength="44.3" lengthAdjust="spacingAndGlyphs" stroke="#000" stroke-width="0.2">1774</text>
<text x="1248" y="452.2" font-family="Liberation Serif" font-size="21.7" fill="#000" textLength="44.4" lengthAdjust="spacingAndGlyphs" stroke="#000" stroke-width="0.2">2024</text>
<text x="1248" y="474" font-family="Liberation Serif" font-size="20.5" fill="#000" stroke="#000" stroke-width="0.2" letter-spacing="1">hz.</text>
<text x="64" y="494.5" font-family="Liberation Serif" font-size="22" fill="#000" textLength="49" lengthAdjust="spacingAndGlyphs" stroke="#000" stroke-width="0.2">Peak:</text>
<text x="131.8" y="496" font-family="Liberation Serif" font-size="22" fill="#000" textLength="11" lengthAdjust="spacingAndGlyphs" stroke="#000" stroke-width="0.2">~</text>
<text x="154" y="496" font-family="Liberation Serif" font-size="22" fill="#000" textLength="61.4" lengthAdjust="spacingAndGlyphs" stroke="#000" stroke-width="0.2">527hz.</text>
<text x="131.8" y="522" font-family="Liberation Serif" font-size="22" fill="#000" textLength="11" lengthAdjust="spacingAndGlyphs" stroke="#000" stroke-width="0.2">~</text>
<text x="148.8" y="522" font-family="Liberation Serif" font-size="22" fill="#000" textLength="41.8" lengthAdjust="spacingAndGlyphs" stroke="#000" stroke-width="0.2">-6dB</text>
<text x="730.5" y="508.2" font-family="Liberation Serif" font-size="21.7" fill="#000" textLength="155.2" lengthAdjust="spacingAndGlyphs" stroke="#000" stroke-width="0.2">Frequency-Range</text>
<path d="M895.4,489.5 H977.4 L982.9,495 V512 H895.4 Z" fill="none" stroke="#000" stroke-width="2"/>
<path d="M896.9,491 L906.4,500.75 L896.9,510.5" fill="none" stroke="#000" stroke-width="1.8"/>
<text x="910.9" y="507.6" font-family="Liberation Serif" font-size="21" fill="#000" textLength="21.0" lengthAdjust="spacingAndGlyphs" stroke="#000" stroke-width="0.2">30</text>
<path d="M1027.4,489.5 H1109.4 L1114.9,495 V512 H1027.4 Z" fill="none" stroke="#000" stroke-width="2"/>
<path d="M1028.9,491 L1038.4,500.75 L1028.9,510.5" fill="none" stroke="#000" stroke-width="1.8"/>
<text x="1042.9" y="507.6" font-family="Liberation Serif" font-size="21" fill="#e0241c" textLength="42.0" lengthAdjust="spacingAndGlyphs" stroke="#e0241c" stroke-width="0.2">2024</text>
<text x="996" y="508.2" font-family="Liberation Serif" font-size="21.7" fill="#000" textLength="16" lengthAdjust="spacingAndGlyphs" stroke="#000" stroke-width="0.2">to</text>
<text x="1129.4" y="508.2" font-family="Liberation Serif" font-size="20.5" fill="#000" stroke="#000" stroke-width="0.2" letter-spacing="1">hz.</text>
<rect x="1191.3" y="489.5" width="23.5" height="23.5" fill="none" stroke="#000" stroke-width="2"/>
<text x="1219" y="508.2" font-family="Liberation Serif" font-size="20.5" fill="#000" stroke="#000" stroke-width="0.2" letter-spacing="1.5">lin.</text>
</g>
<g>
<rect x="1380" y="152.5" width="1100" height="1235" rx="22" fill="#eeeeee" filter="url(#pdshadow)"/>
<path d="M1380,208.5 V174.5 A22,22 0 0 1 1402,152.5 H2480 V208.5 Z" fill="#f1f1f1"/>
<line x1="1380" y1="208.75" x2="2430" y2="208.75" stroke="#d6d6d6" stroke-width="1.5"/>
<circle cx="1408" cy="180" r="11.8" fill="#ee6a5f" stroke="#d8493f" stroke-width="1"/>
<circle cx="1408" cy="180" r="4" fill="#6e1008"/>
<circle cx="1448" cy="180" r="11.8" fill="#f5bf4f" stroke="#d9a134" stroke-width="1"/>
<circle cx="1488" cy="180" r="11.8" fill="#61c454" stroke="#4aa83c" stroke-width="1"/>
<path d="M1885,163.5 H1899 L1907,171.5 V191.5 H1885 Z" fill="#f7f7f7" stroke="#e2e2e2" stroke-width="1"/>
<rect x="1889.5" y="171.2" width="4.6" height="4.3" fill="#7ed36f"/>
<rect x="1889.3" y="177" width="13.2" height="7.4" fill="#fafafa" stroke="#9a9a9a" stroke-width="0.8"/>
<text x="1890.5" y="183.5" font-family="Liberation Sans" font-size="6.5" fill="#888">Pd</text>
<text x="1921.2" y="187.5" font-family="Liberation Sans" font-size="28.5" fill="#454545" font-weight="bold" textLength="232.5" lengthAdjust="spacingAndGlyphs">!paf-test.pd [edit]</text>
<rect x="2044" y="308" width="90" height="146" fill="#000"/>
<rect x="2048" y="312" width="82" height="82" fill="#4a4f52"/>
<rect x="2048" y="398" width="82" height="52" fill="#4a4f52"/>
<rect x="2044" y="308" width="16" height="8" fill="#000"/>
<rect x="2044" y="446" width="16" height="8" fill="#000"/>
<path d="M2052,317 L2124.5,388.5 M2124.5,317 L2052,388.5" stroke="#d2e4c4" stroke-width="3.4"/>
<text x="2055" y="438.1" font-family="Liberation Mono" font-size="46" fill="#d2e4c4" textLength="70" lengthAdjust="spacingAndGlyphs" stroke="#d2e4c4" stroke-width="0.6">DSP</text>
<rect x="1513" y="449" width="358" height="66" fill="none" stroke="#000" stroke-width="2"/>
<rect x="1512" y="448" width="16" height="5" fill="#000"/>
<rect x="1512" y="511" width="16" height="5" fill="#000"/>
<text x="1516" y="475.9" font-family="Liberation Mono" font-size="23.333" fill="#000" stroke="#000" stroke-width="0.4">initmess freq 264, bw 80,</text>
<text x="1516" y="504" font-family="Liberation Mono" font-size="23.333" fill="#000" stroke="#000" stroke-width="0.4">amp 1, cf 650</text>
<line x1="1519" y1="516" x2="1519" y2="562" stroke="#000" stroke-width="2"/>
<rect x="1513" y="563" width="162" height="38" fill="none" stroke="#000" stroke-width="2"/>
<rect x="1512" y="562" width="16" height="5" fill="#000"/>
<rect x="1512" y="597" width="16" height="5" fill="#000"/>
<text x="1516" y="589.7" font-family="Liberation Mono" font-size="23.333" fill="#000" stroke="#000" stroke-width="0.4">oldpaf/paf~</text>
<line x1="1518" y1="601" x2="1518" y2="750" stroke="#000" stroke-width="4.5"/>
<line x1="1519" y1="602" x2="1609" y2="649" stroke="#000" stroke-width="4.5"/>
<rect x="1603" y="649" width="310" height="65" fill="#efefef" stroke="#000" stroke-width="2"/>
<rect x="1602" y="648" width="16" height="5" fill="#000"/>
<text x="1606" y="671.7" font-family="Liberation Mono" font-size="20" fill="#000" stroke="#000" stroke-width="0.4">audiolab/pp.spectrum~</text>
<rect x="1604" y="678" width="308" height="2.3" fill="#000"/>
<rect x="1604" y="680.3" width="308" height="26.7" fill="#dfdfdf"/>
<rect x="1604" y="707" width="308" height="2.5" fill="#000"/>
<rect x="1513" y="751" width="188" height="101.5" fill="#efefef" stroke="#000" stroke-width="2"/>
<rect x="1512" y="750" width="16" height="5" fill="#000"/>
<rect x="1686" y="750" width="16" height="5" fill="#000"/>
<text x="1516" y="773.4" font-family="Liberation Mono" font-size="20" fill="#000" stroke="#000" stroke-width="0.4">out~</text>
<rect x="1514" y="780" width="186" height="2.2" fill="#000"/>
<rect x="1514" y="782.2" width="186" height="30.5" fill="#dcdcdc"/>
<rect x="1514" y="782.2" width="31" height="30.5" fill="#4a4f52"/>
<path d="M1517,785.5 L1542,810 M1542,785.5 L1517,810" stroke="#d4e6c6" stroke-width="1.8"/>
<rect x="1544.5" y="782.2" width="2" height="30.5" fill="#000"/>
<rect x="1596" y="782.2" width="2" height="30.5" fill="#000"/>
<rect x="1668" y="782.2" width="2" height="30.5" fill="#000"/>
<text x="1549.5" y="801.2" font-family="Liberation Mono" font-size="23.333" fill="#5a5d58" stroke="#5a5d58" stroke-width="0.15">dsp</text>
<text x="1606" y="801.2" font-family="Liberation Mono" font-size="23.333" fill="#5a5d58" stroke="#5a5d58" stroke-width="0.15">mute</text>
<circle cx="1685" cy="797.5" r="13.7" fill="none" stroke="#000" stroke-width="1.8"/>
<rect x="1514" y="812" width="186" height="2.5" fill="#000"/>
<rect x="1514" y="814.5" width="186" height="37" fill="#dcdcdc"/>
<rect x="1514" y="814.5" width="2" height="37" fill="#efefef"/>
<rect x="1516.3" y="814.5" width="7.7" height="37" fill="#000"/>
<text x="1553" y="839.7" font-family="Liberation Mono" font-size="26.667" fill="#000" stroke="#000" stroke-width="0.4">volume</text>
<rect x="2015" y="551" width="246" height="38" fill="none" stroke="#000" stroke-width="2"/>
<rect x="2014.0" y="550" width="16" height="5" fill="#000"/>
<rect x="2130.0" y="550" width="16" height="5" fill="#000"/>
<rect x="2246.0" y="550" width="16" height="5" fill="#000"/>
<rect x="2014" y="585" width="16" height="5" fill="#000"/>
<text x="2018" y="577.3" font-family="Liberation Mono" font-size="23.333" fill="#000" stroke="#000" stroke-width="0.4">./paf~ 264 650 80</text>
<line x1="2020" y1="590" x2="2055" y2="651" stroke="#000" stroke-width="4.5"/>
<line x1="2020" y1="590" x2="2016" y2="761" stroke="#000" stroke-width="4.5"/>
<rect x="2049.5" y="651.5" width="310" height="65" fill="#efefef" stroke="#000" stroke-width="2"/>
<rect x="2048.5" y="650.5" width="16" height="5" fill="#000"/>
<text x="2052.5" y="674.2" font-family="Liberation Mono" font-size="20" fill="#000" stroke="#000" stroke-width="0.4">audiolab/pp.spectrum~</text>
<rect x="2050.5" y="680.5" width="308" height="2.3" fill="#000"/>
<rect x="2050.5" y="682.8" width="308" height="26.7" fill="#dfdfdf"/>
<rect x="2050.5" y="709.5" width="308" height="2.5" fill="#000"/>
<rect x="2011.5" y="761.5" width="188" height="101.5" fill="#efefef" stroke="#000" stroke-width="2"/>
<rect x="2010.5" y="760.5" width="16" height="5" fill="#000"/>
<rect x="2184.5" y="760.5" width="16" height="5" fill="#000"/>
<text x="2014.5" y="783.9" font-family="Liberation Mono" font-size="20" fill="#000" stroke="#000" stroke-width="0.4">out~</text>
<rect x="2012.5" y="790.5" width="186" height="2.2" fill="#000"/>
<rect x="2012.5" y="792.7" width="186" height="30.5" fill="#dcdcdc"/>
<rect x="2012.5" y="792.7" width="31" height="30.5" fill="#4a4f52"/>
<path d="M2015.5,796.0 L2040.5,820.5 M2040.5,796.0 L2015.5,820.5" stroke="#d4e6c6" stroke-width="1.8"/>
<rect x="2043.0" y="792.7" width="2" height="30.5" fill="#000"/>
<rect x="2094.5" y="792.7" width="2" height="30.5" fill="#000"/>
<rect x="2166.5" y="792.7" width="2" height="30.5" fill="#000"/>
<text x="2048.0" y="811.7" font-family="Liberation Mono" font-size="23.333" fill="#5a5d58" stroke="#5a5d58" stroke-width="0.15">dsp</text>
<text x="2104.5" y="811.7" font-family="Liberation Mono" font-size="23.333" fill="#5a5d58" stroke="#5a5d58" stroke-width="0.15">mute</text>
<circle cx="2183.5" cy="808.0" r="13.7" fill="none" stroke="#000" stroke-width="1.8"/>
<rect x="2012.5" y="822.5" width="186" height="2.5" fill="#000"/>
<rect x="2012.5" y="825.0" width="186" height="37" fill="#dcdcdc"/>
<rect x="2012.5" y="825.0" width="2" height="37" fill="#efefef"/>
<rect x="2014.8" y="825.0" width="7.7" height="37" fill="#000"/>
<text x="2051.5" y="850.2" font-family="Liberation Mono" font-size="26.667" fill="#000" stroke="#000" stroke-width="0.4">volume</text>
<rect x="1701" y="1005" width="302" height="38" fill="none" stroke="#000" stroke-width="2"/>
<rect x="1700.0" y="1004" width="16" height="5" fill="#000"/>
<rect x="1844.0" y="1004" width="16" height="5" fill="#000"/>
<rect x="1988.0" y="1004" width="16" height="5" fill="#000"/>
<rect x="1700" y="1039" width="16" height="5" fill="#000"/>
<text x="1704" y="1031.3" font-family="Liberation Mono" font-size="23.333" fill="#000" stroke="#000" stroke-width="0.4">./paf–abs~ 264 650 80</text>
<line x1="1706" y1="1044" x2="1741" y2="1105" stroke="#000" stroke-width="4.5"/>
<line x1="1706" y1="1044" x2="1702" y2="1215" stroke="#000" stroke-width="4.5"/>
<rect x="1735" y="1105.5" width="310" height="65" fill="#efefef" stroke="#000" stroke-width="2"/>
<rect x="1734" y="1104.5" width="16" height="5" fill="#000"/>
<text x="1738" y="1128.2" font-family="Liberation Mono" font-size="20" fill="#000" stroke="#000" stroke-width="0.4">audiolab/pp.spectrum~</text>
<rect x="1736" y="1134.5" width="308" height="2.3" fill="#000"/>
<rect x="1736" y="1136.8" width="308" height="26.7" fill="#dfdfdf"/>
<rect x="1736" y="1163.5" width="308" height="2.5" fill="#000"/>
<rect x="1697" y="1215.5" width="188" height="101.5" fill="#efefef" stroke="#000" stroke-width="2"/>
<rect x="1696" y="1214.5" width="16" height="5" fill="#000"/>
<rect x="1870" y="1214.5" width="16" height="5" fill="#000"/>
<text x="1700" y="1237.9" font-family="Liberation Mono" font-size="20" fill="#000" stroke="#000" stroke-width="0.4">out~</text>
<rect x="1698" y="1244.5" width="186" height="2.2" fill="#000"/>
<rect x="1698" y="1246.7" width="186" height="30.5" fill="#dcdcdc"/>
<rect x="1698" y="1246.7" width="31" height="30.5" fill="#4a4f52"/>
<path d="M1701,1250.0 L1726,1274.5 M1726,1250.0 L1701,1274.5" stroke="#d4e6c6" stroke-width="1.8"/>
<rect x="1728.5" y="1246.7" width="2" height="30.5" fill="#000"/>
<rect x="1780" y="1246.7" width="2" height="30.5" fill="#000"/>
<rect x="1852" y="1246.7" width="2" height="30.5" fill="#000"/>
<text x="1733.5" y="1265.7" font-family="Liberation Mono" font-size="23.333" fill="#5a5d58" stroke="#5a5d58" stroke-width="0.15">dsp</text>
<text x="1790" y="1265.7" font-family="Liberation Mono" font-size="23.333" fill="#5a5d58" stroke="#5a5d58" stroke-width="0.15">mute</text>
<circle cx="1869" cy="1262.0" r="13.7" fill="none" stroke="#000" stroke-width="1.8"/>
<rect x="1698" y="1276.5" width="186" height="2.5" fill="#000"/>
<rect x="1698" y="1279.0" width="186" height="37" fill="#dcdcdc"/>
<rect x="1698" y="1279.0" width="2" height="37" fill="#efefef"/>
<rect x="1700.3" y="1279.0" width="7.7" height="37" fill="#000"/>
<text x="1737" y="1304.2" font-family="Liberation Mono" font-size="26.667" fill="#000" stroke="#000" stroke-width="0.4">volume</text>
</g>
</svg></body></html>
